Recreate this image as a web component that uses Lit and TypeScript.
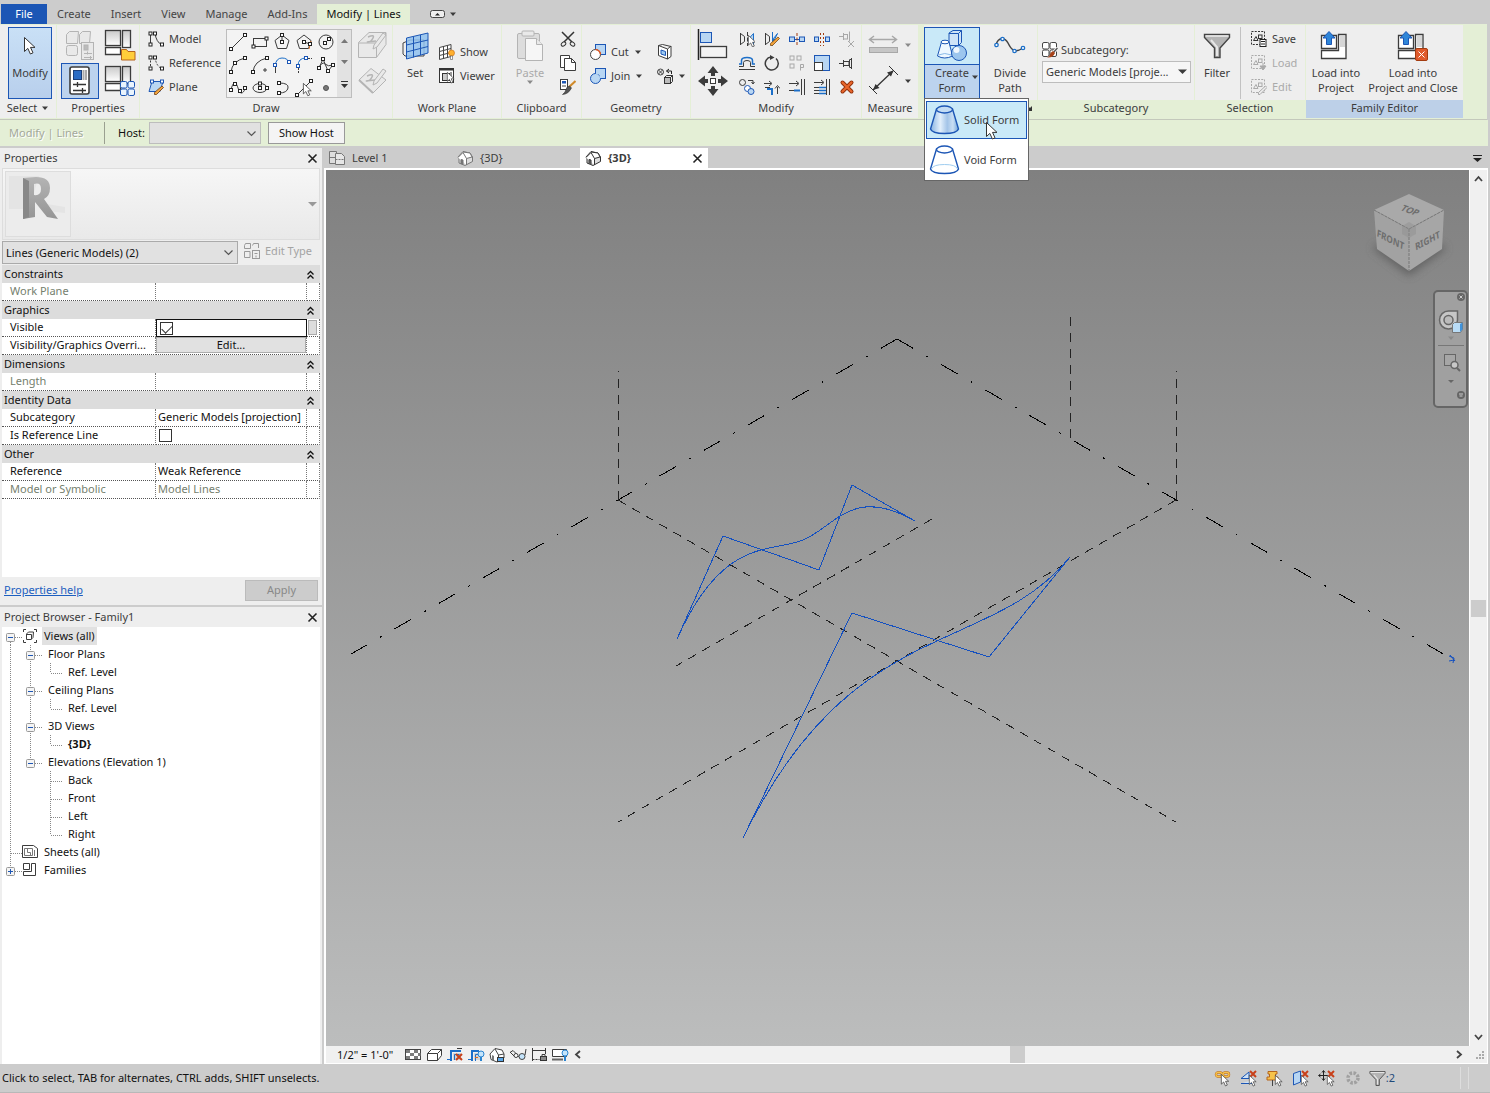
import { LitElement, html, svg, css, nothing } from "lit";
import type { TemplateResult } from "lit";
import { customElement, state } from "lit/decorators.js";
import { classMap } from "lit/directives/class-map.js";

/* ---------- icon helpers ---------- */

const icon = (w: number, h: number, body: unknown) =>
  html`<svg class="ic" width=${w} height=${h} viewBox="0 0 ${w} ${h}" aria-hidden="true">${body}</svg>`;

const node = (x: number, y: number, blue = false) =>
  svg`<rect class=${blue ? "nb" : "n"} x=${x - 1.5} y=${y - 1.5} width="3" height="3"/>`;

const cursor = (x: number, y: number, s = 1) => svg`<path transform="translate(${x} ${y}) scale(${s})"
  d="M0.5 0.5V14.5L3.8 11.4L6.4 17L9 15.8L6.5 10.4H11Z" fill="#fff" stroke="#333" stroke-linejoin="round"/>`;

const redX = (x: number, y: number) => svg`<path class="rx" d="M${x} ${y}l6 6m0-6l-6 6"/>`;

const down = icon(8, 5, svg`<path d="M1 0.5h6L4 4Z" fill="#3c3c3c"/>`);
const downGray = icon(8, 5, svg`<path d="M1 0.5h6L4 4Z" fill="#8a8a8a"/>`);
const close = icon(11, 11, svg`<path d="M1.5 1.5l8 8m0-8l-8 8" stroke="#222" stroke-width="1.6"/>`);
const chevron = icon(11, 8, svg`<path d="M1.5 1.5l4 4l4-4" fill="none" stroke="#555" stroke-width="1.2"/>`);

const docs = (extra: unknown) => icon(32, 32, svg`
  <defs><linearGradient id="dg" x1="0" y1="0" x2="0" y2="1"><stop offset="0" stop-color="#c9c9c9"/><stop offset="1" stop-color="#fff"/></linearGradient></defs>
  <rect x="1.500" y="1.500" width="15" height="15" fill="url(#dg)" stroke="#3c3c3c" stroke-width="1.300"/>
  <rect x="18.500" y="1.500" width="8" height="17" fill="url(#dg)" stroke="#3c3c3c" stroke-width="1.300"/>
  <path d="M1.500 18.500h15v7h-15Z" fill="#fff" stroke="#3c3c3c" stroke-width="1.300"/>${extra}`);

const blocks = (x: number, y: number, c: string) => svg`
  <g class=${c} transform="translate(${x} ${y})">
    <rect x="0.5" y="0.5" width="6.500" height="6.500" rx="1.5"/><rect x="8" y="0.5" width="6.500" height="6.500" rx="1.5"/>
    <rect x="0.5" y="8" width="6.500" height="6.500" rx="1.5"/><rect x="8" y="8" width="6.500" height="6.500" rx="1.5"/></g>`;

const typeProps = icon(32, 32, svg`<g class="g">
  <path d="M2.500 5.500l3-3h9l-1 12h-11Z"/><path d="M15.500 5.500l3-3h8l-1 12h-10Z"/>
  <rect x="2.500" y="16.500" width="11" height="10" rx="2"/>
  <rect x="17.500" y="13.500" width="12" height="17"/><rect x="20" y="16" width="4" height="5" fill="#bbb"/>
  <path d="M20 24.500h8M20 28.500h8M23.500 22.500v3M26.500 27v3"/></g>`);
const docFolder = docs(svg`<path d="M17.500 20.500h5l1.500 2h7v8.500h-13.500Z" fill="#ffce3a" stroke="#b5651d"/>`);
const docBlocks = docs(blocks(16, 16, "bw"));
const propsIcon = icon(22, 30, svg`<rect x="1" y="1" width="19" height="27" rx="2" fill="#fff" stroke="#3c3c3c" stroke-width="1.600"/>
  <rect x="4.500" y="4.500" width="8" height="9" fill="#2b6cc4" stroke="#1b3f7a"/><path d="M14.500 4v10M17 4v10" stroke="#aaa" stroke-width="2"/>
  <path d="M4 18.500h13M4 24.500h13M8.500 16v5M13.500 22v5" stroke="#333" stroke-width="1.300"/>`);

const modelLine = icon(16, 16, svg`<path class="k" d="M2.500 2v12M7 2q1 9 7 12"/>${node(2.5, 2.5)}${node(2.5, 13.5)}${node(7, 2.5)}${node(14, 13.5)}`);
const refLine = icon(16, 16, svg`<path class="k" stroke-dasharray="2 1.500" d="M2.500 2v12M7 2q1 9 7 12"/>${node(2.5, 2.5)}${node(2.5, 13.5)}${node(7, 2.5)}${node(14, 13.5)}`);
const planeIcon = icon(16, 16, svg`<path d="M4 2.500h11l-3 10H1Z" fill="#b8d6f3" stroke="#1c56b5"/><path d="M14 7l1.500 1.500l-7 7h-2v-2Z" fill="#f1a33c" stroke="#6b3a12" stroke-width="0.800"/>${node(4, 2.5, true)}${node(14, 2.5, true)}`);

/* ---------- draw gallery ---------- */
const drawTools: [string, TemplateResult][] = [
  ["Line", icon(20, 20, svg`<path class="k" d="M3 17L17 3"/>${node(3, 17)}${node(17, 3)}`)],
  ["Rectangle", icon(20, 20, svg`<rect class="k" x="3.500" y="6.500" width="13" height="8"/>${node(3.5, 14.5)}${node(16.5, 6.5)}`)],
  ["Inscribed Polygon", icon(20, 20, svg`<path class="k" d="M10 3l7 5.500l-2.500 8h-9L3 8.500Z"/><path class="k" d="M10 3v7"/>${node(10, 3)}${node(10, 10)}`)],
  ["Circumscribed Polygon", icon(20, 20, svg`<path class="k" d="M10 3l7 5.500l-2.500 8h-9L3 8.500Z"/><path d="M17 9l-2 8" stroke="#e07020"/><path class="k" d="M10 10l6 2"/>${node(10, 10)}${node(16, 12)}`)],
  ["Circle", icon(20, 20, svg`<circle class="k" cx="10" cy="10" r="7"/><path class="k" d="M9 11l4-4"/>${node(9, 11)}${node(13, 7)}`)],
  ["Start-End-Radius Arc", icon(20, 20, svg`<path class="k" d="M3 17q1-11 14-14"/>${node(3, 17)}${node(7, 8)}${node(17, 3)}`)],
  ["Center-ends Arc", icon(20, 20, svg`<path class="k" d="M3 17q1-11 14-14"/><path d="M15 13v4M13 15h4" stroke="#3c3c3c"/>${node(3, 17)}${node(17, 3)}`)],
  ["Tangent End Arc", icon(20, 20, svg`<path class="b" d="M3 11q1-8 7-8t7 5"/><path d="M3.500 12v6" stroke="#3c3c3c"/>${node(3, 10, true)}${node(17, 7, true)}`)],
  ["Fillet Arc", icon(20, 20, svg`<path class="b" d="M4 11q0-8 8-8"/><path d="M4.500 12v6M13 3.500h5" stroke="#3c3c3c" stroke-dasharray="3 1"/>${node(4, 11, true)}${node(12, 3, true)}`)],
  ["Spline", icon(20, 20, svg`<path class="k" d="M3 13L7 4l5 12l5-6"/><path class="k" d="M3 13q3-7 6-4t8 1"/>${node(3, 13)}${node(7, 4)}${node(12, 16)}${node(17, 10)}`)],
  ["Spline Through Points", icon(20, 20, svg`<path class="k" d="M3 12C5 3 8 3 10 10s5 6 7 1"/>${node(3, 12)}${node(7, 6)}${node(12, 13)}${node(17, 10)}`)],
  ["Ellipse", icon(20, 20, svg`<ellipse class="k" cx="10" cy="10" rx="7" ry="4.500"/>${node(10, 10)}${node(17, 10)}${node(10, 5.5)}`)],
  ["Partial Ellipse", icon(20, 20, svg`<path class="k" d="M7 5q10 0 9 5t-9 5"/>${node(7, 5)}${node(7, 15)}`)],
  ["Pick Lines", icon(20, 20, svg`<path class="k" d="M3 17L17 3"/>${node(3, 17)}${node(17, 3)}${cursor(9, 5, 0.75)}`)],
  ["Point Element", icon(20, 20, svg`<circle cx="10" cy="10" r="2.500" fill="#777" stroke="#555"/>`)],
];

const pen = svg`<path d="M28 4l3 2l-9 12l-4 2l1-4Z" transform="translate(-2 0)"/>`;
const drawFace = icon(32, 32, svg`<g class="g"><path d="M1.500 13.500L12 3.500h17v12L19.500 28.500h-18Z"/><path d="M1.500 14h18v14.500M19.500 14l9.500-10"/><path d="M11 8q7-3 5 1t-5 4t8-1" stroke-width="1.500"/>${pen}</g>`);
const drawPlane = icon(32, 32, svg`<g class="g"><path d="M2 15L14 3.500L29 15L16 28Z"/><path d="M2 15l14 13" stroke-width="2"/><path d="M10 11q7-3 5 1t-5 4t8-1" stroke-width="1.500"/>${pen}</g>`);

/* ---------- work plane / clipboard / geometry ---------- */
const setIcon = icon(28, 30, svg`<path d="M2 12l7-3h14v16H4l-2-2Z" fill="#eee" stroke="#444"/>
  <path d="M5.500 7L27 2v20L5.500 28Z" fill="#8fc1ee" fill-opacity="0.850" stroke="#1c56b5"/>
  <path d="M12.500 5.500v21M19.500 4v20M5.500 14L27 9M5.500 21L27 15.500" stroke="#1c56b5" fill="none"/>`);
const showIcon = icon(16, 16, svg`<path d="M0.500 3.500L12 0.500v12L0.500 15.500ZM4.500 2.500v12M8.500 1.500v12M0.500 7.500L12 4.500M0.500 11.500L12 8.500" fill="#fff" stroke="#444"/>
  <circle cx="12.500" cy="9" r="3" fill="#ffb02e" stroke="#c86a10" stroke-width="0.600"/><path d="M11.500 12h2v3.500h-2Z" fill="#fff" stroke="#555" stroke-width="0.600"/>`);
const viewerIcon = icon(16, 16, svg`<rect x="0.500" y="0.500" width="14" height="14" fill="#fff" stroke="#333"/><path d="M0 1.500h15" stroke="#333" stroke-width="2"/><rect x="3.500" y="5.500" width="7" height="7" fill="#ccc" stroke="#333"/><path d="M12 4v10" stroke="#999" stroke-width="2"/>${cursor(8, 4, 0.65)}`);
const pasteIcon = icon(28, 32, svg`<g class="g"><rect x="1.500" y="3.500" width="22" height="25" rx="1.500" fill="#ddd"/><rect x="6" y="1" width="12" height="5" rx="1"/><path d="M9.500 8.500h11l6 6v16h-17Z" fill="#f6f6f6"/><path d="M20.500 8.500v6h6"/></g>`);
const cutClip = icon(16, 16, svg`<path d="M2 1l10 10M14 1L4 11" stroke="#333" stroke-width="1.500"/><ellipse cx="3.500" cy="13" rx="2.500" ry="1.800" fill="none" stroke="#333" transform="rotate(-40 3.500 13)"/><ellipse cx="12.500" cy="13" rx="2.500" ry="1.800" fill="none" stroke="#333" transform="rotate(40 12.500 13)"/>`);
const copyClip = icon(16, 16, svg`<path class="w" d="M0.500 0.500h9v12h-9Z"/><path class="w" d="M4.500 3.500h7l4 4v8h-11Z"/><path class="k" d="M11.500 3.500v4h4"/>`);
const matchType = icon(16, 16, svg`<rect class="w" x="0.500" y="0.500" width="7" height="10"/><rect x="2" y="2" width="4" height="2.500" fill="#1c56b5"/><path d="M2 7h4" stroke="#444"/><path d="M15.500 2L9 8" stroke="#d08a2a" stroke-width="2"/><path d="M9.500 7l2 2q-3 6-9 6.500q3-2 3.500-5t3.500-3.500" fill="#555" stroke="#333" stroke-width="0.600"/>`);
const cutGeo = icon(16, 16, svg`<rect x="5.500" y="0.500" width="10" height="10" fill="#b8d6f3" stroke="#1c56b5"/><circle cx="5.500" cy="10.500" r="5" fill="#fff" stroke="#444"/><path d="M5.500 5.500a5 5 0 0 1 5 5" fill="none" stroke="#e0561e" stroke-width="1.400"/>`);
const joinGeo = icon(16, 16, svg`<rect x="5.500" y="0.500" width="10" height="10" fill="#b8d6f3" stroke="#1c56b5"/><circle cx="5.500" cy="10.500" r="5" fill="#b8d6f3" stroke="#1c56b5"/><path d="M6 5.500h4.500v4.500" fill="none" stroke="#b8d6f3" stroke-width="2"/>`);
const splitFace = icon(16, 16, svg`<path class="w" d="M1.500 1.500l9 3.500v10l-9-3.500ZM10.500 5l3.500-3v10.500l-3.500 2.500M1.500 1.500l4-1l8.500 2"/><path d="M4 6l4.500 1.500v4L4 10Z" fill="#9ccaf2" stroke="#1c56b5"/>`);
const demolish = icon(16, 16, svg`<circle cx="3.500" cy="4" r="3" fill="none" stroke="#444"/><path d="M1.500 2l4 4m0-4l-4 4" stroke="#444"/><path d="M9.500 3h5v3M12 1l-2.500 2L12 5" fill="none" stroke="#222"/><rect x="7.500" y="9.500" width="6" height="6" fill="#bbb" stroke="#333"/><path d="M7.500 9.500l2-2h6v6l-2 2M13.500 9.500l2-2" fill="none" stroke="#333"/>`);

/* ---------- modify ---------- */
const alignIcon = icon(32, 32, svg`<path d="M1.500 0v31" stroke="#222" stroke-width="1.500"/><rect x="3.500" y="3.500" width="11" height="10" fill="#b8d6f3" stroke="#1c56b5"/><rect x="3.500" y="17.500" width="26" height="11" fill="#f3f3f3" stroke="#3c3c3c" stroke-width="1.300"/>`);
const moveIcon = icon(32, 32, svg`<path d="M16 1l5.500 7h-3.500v3h-4v-3h-3.500ZM16 31l5.500-7h-3.500v-3h-4v3h-3.500ZM1 16l7-5.500v3.500h3v4h-3v3.500ZM31 16l-7-5.500v3.500h-3v4h3v3.500Z" fill="#3c3c3c"/><rect x="13.500" y="13.500" width="5" height="5" fill="#fff" stroke="#3c3c3c"/>`);
const modifyTools: [string, TemplateResult][] = [
  ["Mirror - Pick Axis", icon(16, 16, svg`<path class="k" d="M1.500 2v12M1.500 2.500l4 3v5l-4 3"/><path d="M14.500 2.500l-4.500 5v3l4.500 3Z" fill="#b8d6f3" stroke="#1c6fc9"/><path class="k" stroke-dasharray="4 1.500" d="M8.500 1v14"/>${cursor(9, 4, 0.7)}`)],
  ["Mirror - Draw Axis", icon(16, 16, svg`<path class="k" d="M1.500 2v12M1.500 2.500l4 3v5l-4 3"/><path d="M13.500 2.500l-4 5v3Z" fill="#b8d6f3" stroke="#1c6fc9"/><path class="b" d="M8.500 1v14"/><path d="M14 6l1.500 1.500l-7 7h-2v-2Z" fill="#f1a33c" stroke="#7b4a12" stroke-width="0.800"/>`)],
  ["Split Element", icon(16, 16, svg`<rect x="0.500" y="6" width="5" height="4.500" fill="#b8d6f3" stroke="#1c56b5"/><rect x="10.500" y="6" width="5" height="4.500" fill="#b8d6f3" stroke="#1c56b5"/><path d="M5.500 8.500h5" stroke="#1c56b5"/><path d="M8 2v13" stroke="#a33c10" stroke-dasharray="3 1.500"/>`)],
  ["Split with Gap", icon(16, 16, svg`<rect x="0.500" y="6" width="4" height="4.500" fill="#b8d6f3" stroke="#1c56b5"/><rect x="11.500" y="6" width="4" height="4.500" fill="#b8d6f3" stroke="#1c56b5"/><path d="M6.500 2v13M9.500 2v13" stroke="#a33c10" stroke-dasharray="2 2"/>`)],
  ["Unpin", icon(16, 16, svg`<path class="gs" d="M0 5.500h4M4.500 2v7M5 3.500h4M5 8h4M10.500 0.500v10M8.500 3v5M9 10l6 6m0-6l-6 6"/>`)],
  ["Offset", icon(16, 16, svg`<path class="k" d="M0 14.500h16"/><path class="k" d="M0 11.500h4.500V7.500q0-2 3.500-2t3.500 2v4H16"/><path class="b" stroke-width="1.500" d="M0 9h2.500V5.500q0-3 5.500-3t5.500 3V9H16"/>`)],
  ["Rotate", icon(16, 16, svg`<path d="M7 2a6.500 6.500 0 1 0 5 1.500" fill="none" stroke="#3c3c3c" stroke-width="1.500"/><path d="M6 0l4.500 2.500L6 5Z" fill="#3c3c3c"/>`)],
  ["Array", icon(16, 16, svg`<g class="gs"><rect x="1" y="1" width="4" height="4"/><rect x="8" y="1" width="4" height="4"/><rect x="1" y="9" width="4" height="4"/><path d="M11.500 15.500v-6h3v3h-3"/></g>`)],
  ["Scale", icon(16, 16, svg`<rect x="0.500" y="0.500" width="15" height="15" fill="#b8d6f3" stroke="#1c56b5"/><rect class="w" x="0.500" y="7.500" width="8" height="8"/>`)],
  ["Pin", icon(16, 16, svg`<path class="k" d="M0 8.500h4M4.500 5v7M5 6.500h5v4H5M12.500 3v11M10.500 4.500v8M10.500 5l2-1M10.500 12l2 1"/>`)],
  ["Copy", icon(16, 16, svg`<circle class="k" cx="3.500" cy="3.500" r="3"/><path class="k" d="M9 1.500h5v3M12.500 3l1.500 2l1.500-2"/><circle cx="8.500" cy="9.500" r="3" fill="#fff" stroke="#1c56b5"/><circle cx="12" cy="12.500" r="3" fill="#b8d6f3" stroke="#1c56b5"/>`)],
  ["Trim/Extend to Corner", icon(16, 16, svg`<path class="k" d="M0 4.500h7M5 2l3 2.500L5 7M1 8.500h5M13.500 15V8M11 9.500l2.500-3l2.500 3"/><path class="b" stroke-width="2" d="M3 10h5v6"/>`)],
  ["Trim/Extend Single Element", icon(16, 16, svg`<path class="k" d="M0 4.500h9M7 2l3 2.500L7 7M0 11.500h5M12.500 0v16M15.500 0v16"/><path class="b" stroke-width="2" d="M5 11.500h6"/>`)],
  ["Trim/Extend Multiple Elements", icon(16, 16, svg`<path class="k" d="M0 3.500h9M7 1l3 2.500L7 6M0 8.500h5M0 11.500h5M0 14.500h5M12.500 0v16M15.500 0v16"/><path class="b" stroke-width="1.500" d="M5 8.500h7M5 11.500h7M5 14.500h7"/>`)],
  ["Delete", icon(16, 16, svg`<path d="M3.500 3.500l9 9M12.500 3.500l-9 9" stroke="#8f2f0a" stroke-width="4" stroke-linecap="round"/><path d="M3.500 3.500l9 9M12.500 3.500l-9 9" stroke="#e8662c" stroke-width="2.200" stroke-linecap="round"/>`)],
];
const measureBetween = icon(32, 22, svg`<g class="gs"><path d="M2 5.500h26M6 2L1.500 5.500L6 9M24 2l4.500 3.500L24 9" stroke-width="1.500"/><rect x="1.500" y="13.500" width="28" height="5" fill="#c6c6c6"/></g>`);
const alignedDim = icon(32, 32, svg`<path d="M5 25L25 6" stroke="#333" stroke-width="1.300"/><path d="M5 25l2.500-6l4 4ZM25.500 5.500l-6.500 2l4 4Z" fill="#333"/><path d="M1 21l8 8M21 1l9 9" stroke="#333"/>`);

/* ---------- form ---------- */
const createForm = icon(32, 32, svg`<path d="M13 3l4-2.500h8.500v12l-3 3H13Z" fill="#cfe3f7" stroke="#1c56b5"/><path d="M13 3.500h9.500v12M22.500 3.500l3-3" fill="none" stroke="#1c56b5"/>
  <path d="M5.500 12L1.500 26q7 4 15 0L13 12Z" fill="#eef7ff" stroke="#1c56b5"/><ellipse cx="9" cy="12" rx="4" ry="1.800" fill="#fff" stroke="#1c56b5"/><path d="M2.500 25q6-3 13 0" fill="none" stroke="#8bbbe8"/>
  <circle cx="23" cy="23" r="7.500" fill="#9cc6ee" stroke="#1c56b5"/><circle cx="20.500" cy="20" r="3" fill="#fff" opacity="0.850"/>`);
const dividePath = icon(32, 20, svg`<path d="M2 9C4 1 11 1 14 7S20 18 29 12" fill="none" stroke="#444" stroke-width="1.500"/>
  <g fill="#fff" stroke="#1c6fc9" stroke-width="1.300"><circle cx="2.500" cy="9" r="1.700"/><circle cx="8.500" cy="3" r="1.700"/><circle cx="20.500" cy="15" r="1.700"/><circle cx="29" cy="12" r="1.700"/></g>`);
const frustum = (solid: boolean) => icon(32, 32, svg`
  <defs><linearGradient id="fg" x1="0" y1="0" x2="1" y2="0"><stop offset="0" stop-color="#86b2e0"/><stop offset="0.350" stop-color="#e2effb"/><stop offset="0.600" stop-color="#a3c4e8"/><stop offset="0.800" stop-color="#c9def3"/><stop offset="1" stop-color="#6fa3d8"/></linearGradient></defs>
  <path d="M7.500 5L1.500 25Q3 29.500 15.500 29.500T29.500 25L23.500 5Z" fill=${solid ? "url(#fg)" : "#fff"} stroke="#1c56b5" stroke-width="1.400"/>
  ${solid ? nothing : svg`<path d="M2.500 25Q4 20.500 15.500 20.500T28.500 25" fill="none" stroke="#9fcdf0"/>`}
  <ellipse cx="15.500" cy="5.500" rx="8" ry="3.500" fill=${solid ? "#c3dcf4" : "#fff"} stroke="#1c56b5" stroke-width="1.400"/>`);

/* ---------- right-hand ribbon ---------- */
const subcatIcon = icon(16, 16, svg`${blocks(0, 0, "kw")}<path d="M15.500 6L10 12" stroke="#fff" stroke-width="3"/><path d="M15.500 6L11 11" stroke="#555" stroke-width="1.500"/><path d="M11 9l2 2q-2 5-8 4.500q3-1 3-3t3-3.500" fill="#a8431a"/>`);
const funnel = (w: number) => html`<svg class="ic" width=${w} height=${w} viewBox="0 0 28 28" aria-hidden="true"><path d="M1.500 2.500h25v3L17 16v9.500h-5.500V16L1.500 5.500Z" fill="#b4b4b4" stroke="#444" stroke-width="1.400"/><path d="M2.500 4h23" stroke="#eee" stroke-width="1.500"/><path d="M8 8l6 7v9" fill="none" stroke="#e6e6e6" stroke-width="2"/></svg>`;
const selIcon = (c: string, extra: unknown) => icon(16, 16, svg`<rect x="0.500" y="0.500" width="13" height="13" fill="none" stroke=${c} stroke-dasharray="2 1.250"/><path d="M2.500 9.500l2.500-4l2 4Z" fill="none" stroke=${c}/><rect x="7.500" y="4" width="3.500" height="3.500" fill="none" stroke=${c}/>${extra}`);
const saveSel = selIcon("#333", svg`<rect x="9" y="8.500" width="6" height="7" fill="#fff" stroke="#222"/><path d="M10 10.500h4M10 13h4" stroke="#222"/>`);
const loadSel = selIcon("#aaa", svg`<path d="M12 8v5m-3-2l3 4l3-4Z" fill="#aaa" stroke="#aaa"/>`);
const editSel = selIcon("#aaa", svg`<path d="M14.500 7l1.500 1.500l-7 7H7.500v-2Z" fill="#eee" stroke="#aaa"/>`);
const loadBase = svg`<g fill="#fff" stroke="#3c3c3c" stroke-width="1.300"><path d="M1.500 5.500h15v13h-15Z"/><path d="M18.500 4.500h7.500v24H1.500v-8h17Z"/></g><rect x="20" y="6" width="5" height="11" fill="#d6d6d6"/><path d="M9 1.500l6 6.500h-3.500v6.500h-5V8H3Z" fill="#2f86d8" stroke="#1c56b5"/>`;
const loadProj = icon(32, 32, loadBase);
const loadClose = icon(32, 32, svg`${loadBase}<rect x="18.500" y="18.500" width="12" height="12" rx="1.500" fill="#e05a2b" stroke="#a33c10"/><path d="M21.500 21.500l6 6m0-6l-6 6" stroke="#fff"/>`);
const launcher = icon(8, 8, svg`<path d="M1 1l4 4" stroke="#333" stroke-width="1.300"/><path d="M7 2v5H2Z" fill="#333"/>`);

/* ---------- view tabs, browser ---------- */
const house = (c: string) => icon(16, 16, svg`<path d="M1 7l5-5.500l7 1.500l2.500 4v4.500L8 15.500l-6-2.500V7" fill="#ddd" stroke=${c}/><path d="M1 7.500l5-5l3.500 6V15M6 2l7 1l2 4l-5.500 1.500" fill="#fff" stroke=${c}/><path d="M4 14V9.500l2 0.500v4.500" fill="#777" stroke=${c}/>`);
const planTab = icon(16, 16, svg`<path d="M0.500 1.500h7v12h-7ZM0.500 7.500h7" fill="#ddd" stroke="#777"/><path d="M6.500 3.500h6l3 3v8h-9Z" fill="#e6e6e6" stroke="#777"/><path d="M6.500 9.500h9" stroke="#777" stroke-dasharray="2 1"/>`);
const viewsIcon = icon(16, 16, svg`<path class="k" d="M1.500 4v-2.500h2.500M12 1.500h2.500v2.500M1.500 12v2.500h2.500M12 14.500h2.500v-2.500"/><path class="w" d="M4.500 6l2-2h5l-0.500 5.500l-2 2h-4.500Z"/><path class="k" d="M4.500 6.500h5v5"/>`);
const sheetsIcon = icon(16, 16, svg`<path class="w" d="M0.500 1.500h11l4 3v9h-15Z"/><path d="M2.500 4.500h8v7h-8ZM5.500 4.500v4h3v3M12.500 6v6" fill="none" stroke="#777"/>`);
const familiesIcon = icon(16, 16, svg`<path class="w" d="M1.500 1.500h6v6h-6ZM9.500 1.500h4v12h-12v-4h8Z"/>`);
const editTypeIcon = icon(16, 16, svg`<g class="gl"><path d="M0.500 2.500l1-2h5v5h-6ZM8.500 2.500l1-2h5v4.500M0.500 8.500h5.500v6h-5.500Z"/><rect x="8.500" y="7.500" width="7" height="8"/><path d="M10.500 10.500h3M12 12.500v2"/></g>`);

/* ---------- view control bar ---------- */
const viewTools: [string, TemplateResult][] = [
  ["Detail Level", icon(17, 16, svg`<rect x="0.500" y="2.500" width="15" height="10" fill="#fff" stroke="#444"/><path d="M1 3h4v3H1ZM9 3h4v3H9ZM5 6h4v3H5ZM13 6h2.500v3H13ZM1 9h4v3H1ZM9 9h4v3H9Z" fill="#7c7c7c"/>`)],
  ["Visual Style", icon(17, 16, svg`<path class="w" d="M1.500 6.500l4-4h10v6l-4 5h-10Z"/><path class="k" d="M1.500 6.500h10v7M11.500 6.500l4-4"/>`)],
  ["Sun Path", icon(17, 16, svg`<path d="M6 13V6h8v7Z" fill="#d5d5d5"/><path class="b" stroke-width="2" d="M4 14V4h10"/><path class="b" d="M0 12.500h3M7.500 13V7.500h5"/><path class="k" d="M10 1.500h5"/>${redX(9, 7)}`)],
  ["Crop View", icon(17, 16, svg`<path d="M6 13V6h6v7Z" fill="#d5d5d5"/><path class="b" stroke-width="2" d="M4 14V4h7"/><path class="b" d="M0 12.500h3M7.500 14V7.500h3"/><path d="M7 10.500h3" stroke="#e06a20"/><circle cx="13" cy="7" r="3" fill="#c4e4fb" stroke="#2a84d0"/><path d="M13 10v4" stroke="#2a84d0" stroke-width="2"/>`)],
  ["Locked 3D View", icon(17, 16, svg`<path d="M1 7L6 1.500l7 1.500l2 4v4L8 15l-6-2.500Z" fill="#fff" stroke="#444"/><path d="M6 2l3.500 6v7M9.500 8L15 7" fill="none" stroke="#444"/><path d="M3 13V8l2 1v4.500" fill="#777"/><rect x="8.500" y="10.500" width="6" height="4" fill="#5aa7e8" stroke="#333"/>`)],
  ["Temporary Hide/Isolate", icon(17, 16, svg`<path class="k" d="M0 5l4 4q2-2 3-1t3 3M16 2l-1 6M0 5.500l3-2l4 4"/><circle cx="6" cy="8.500" r="2" class="w"/><circle cx="12" cy="9.500" r="3" fill="#c4e4fb" stroke="#444"/>`)],
  ["Reveal Hidden Elements", icon(17, 16, svg`<path class="k" d="M1.500 1v13M14.500 1v6M1.500 3.500h13"/><path class="k" stroke-dasharray="2 1" d="M1.500 12.500h7"/><rect x="9.500" y="9.500" width="6" height="4" fill="#888" stroke="#333"/><path class="k" d="M11 9.500v-2h3v2"/>`)],
  ["Temporary View Properties", icon(17, 16, svg`<path class="w" d="M0.500 2.500h14v7h-14Z"/><path d="M0 12.500h11" stroke="#666" stroke-width="2"/><circle cx="13" cy="6" r="3" fill="#c4e4fb" stroke="#2a84d0"/><path d="M13 9v5" stroke="#2a84d0" stroke-width="2"/>`)],
];

/* ---------- status bar ---------- */
const statusTools: [string, TemplateResult][] = [
  ["Select Links", icon(18, 18, svg`<g fill="none" stroke-width="2.400" stroke="#b5651d"><rect x="2" y="3.500" width="6" height="4" rx="2"/><rect x="9" y="3.500" width="6" height="4" rx="2"/></g><g fill="none" stroke-width="1.400" stroke="#f6c24a"><rect x="2" y="3.500" width="6" height="4" rx="2"/><rect x="9" y="3.500" width="6" height="4" rx="2"/></g>${cursor(7, 5, 0.7)}`)],
  ["Select Underlay Elements", icon(18, 18, svg`<path d="M1 9.500L9 3v6.500ZM1 14.500h12l-2-3" fill="#cfe3f7" stroke="#1c56b5"/>${redX(10, 2)}${cursor(9, 6, 0.65)}`)],
  ["Select Pinned Elements", icon(18, 18, svg`<path d="M2 2.500h9v2.500H9.500v3H12v3H1V8h2.500V5H2Z" fill="#f6c24a" stroke="#b5651d"/><path d="M6.500 11v6" stroke="#444"/>${cursor(9, 6, 0.65)}`)],
  ["Select Elements by Face", icon(18, 18, svg`<path d="M1.500 4.500l7-2.500v11l-7 3Z" fill="#b8d6f3" stroke="#1c56b5"/>${redX(10, 2)}${cursor(9, 6, 0.65)}`)],
  ["Drag Elements on Selection", icon(18, 18, svg`<path d="M5.500 2v9M1 6.500h9M4 3.500l1.500-2l1.500 2M4 9.500l1.500 2l1.500-2M2.500 5l-2 1.500l2 1.500" fill="none" stroke="#222"/>${redX(10, 2)}${cursor(9, 6, 0.65)}`)],
  ["Background Processes", icon(18, 18, svg`<circle cx="9" cy="9" r="5" fill="none" stroke="#a0a0a0" stroke-width="3.500" stroke-dasharray="2.500 1.400"/>`)],
];

/* ---------- data ---------- */
interface Prop { name: string; value?: unknown; off?: boolean }
const properties: { title: string; rows: Prop[] }[] = [
  { title: "Constraints", rows: [{ name: "Work Plane", off: true }] },
  { title: "Graphics", rows: [{ name: "Visible", value: "check-on" }, { name: "Visibility/Graphics Overri...", value: "edit" }] },
  { title: "Dimensions", rows: [{ name: "Length", off: true }] },
  { title: "Identity Data", rows: [{ name: "Subcategory", value: "Generic Models [projection]" }, { name: "Is Reference Line", value: "check-off" }] },
  { title: "Other", rows: [{ name: "Reference", value: "Weak Reference" }, { name: "Model or Symbolic", value: "Model Lines", off: true }] },
];

/* Guide codes: v line through, t tee, e end, s blank, - open node, = last open node, + closed node, r root node */
const tree: { g: string; label: string; icon?: TemplateResult; cls?: string }[] = [
  { g: "r", label: "Views (all)", icon: viewsIcon, cls: "sel" },
  { g: "v-", label: "Floor Plans" },
  { g: "vve", label: "Ref. Level" },
  { g: "v-", label: "Ceiling Plans" },
  { g: "vve", label: "Ref. Level" },
  { g: "v-", label: "3D Views" },
  { g: "vve", label: "{3D}", cls: "bold" },
  { g: "v=", label: "Elevations (Elevation 1)" },
  { g: "vst", label: "Back" },
  { g: "vst", label: "Front" },
  { g: "vst", label: "Left" },
  { g: "vse", label: "Right" },
  { g: "t", label: "Sheets (all)", icon: sheetsIcon },
  { g: "+", label: "Families", icon: familiesIcon },
];

const guide = (c: string) => {
  const box = "-=+r".includes(c);
  const top = c === "r" ? 9 : 0;
  const bottom = "e=+".includes(c) ? 10 : 18;
  const art = icon(20, 18, svg`
    ${c !== "s" ? svg`<path class="dot" d="M8.500 ${top}V${bottom}"/>` : nothing}
    ${"te-=+r".includes(c) ? svg`<path class="dot" d="M8.500 10.500H20"/>` : nothing}
    ${box ? svg`<rect x="4.500" y="6.500" width="8" height="8" rx="1" fill="#f4f4f4" stroke="#999"/><path d="M6 10.500h5${c === "+" ? "M8.500 8v5" : ""}" stroke="#1c56b5"/>` : nothing}`);
  return box ? html`<button class="plain" aria-label="Toggle branch">${art}</button>` : art;
};

@customElement("app-root")
export class AppRoot extends LitElement {
  @state() private viewTab = 2;
  @state() private formMenu = true;

  static styles = css`
    :host { display: block; font: 11px/16px "Noto Sans", "Open Sans", sans-serif; color: #111; }
    * { box-sizing: border-box; }
    .app { display: flex; flex-direction: column; min-height: 100vh; background: #ccc; border-bottom: 1px solid #b8b8b8; }
    button, select, input { font: inherit; color: inherit; margin: 0; padding: 0; }
    button { border: 0; background: none; white-space: nowrap; }
    .ic { display: block; flex: none; }
    .k { fill: none; stroke: #3c3c3c; }
    .b { fill: none; stroke: #1c6fc9; }
    .w { fill: #fff; stroke: #3c3c3c; }
    .n { fill: #fff; stroke: #222; }
    .nb { fill: #fff; stroke: #1c56b5; }
    .g { fill: #e9e9e9; stroke: #b4b4b4; }
    .gs { fill: none; stroke: #a8a8a8; }
    .gl { fill: none; stroke: #999; }
    .bw { fill: #eaf4fd; stroke: #1c56b5; }
    .kw { fill: #fff; stroke: #444; }
    .rx { stroke: #c8401a; stroke-width: 2; }
    .dot { fill: none; stroke: #888; stroke-dasharray: 1 1; shape-rendering: crispEdges; }
    .plain { display: grid; place-items: center; }

    /* ribbon tabs */
    .tabs { display: flex; height: 24px; padding: 4px 0 0 1px; color: #444; }
    .tabs button { padding: 0 10px; height: 20px; }
    .tabs .file { background: #1c56b5; color: #fff; width: 46px; padding: 0; }
    .tabs .on { background: #e4efd6; color: #111; padding: 0 9px; }
    .tabs .cycle { display: flex; align-items: center; gap: 3px; padding: 0 20px; }

    /* ribbon */
    .ribbon { display: flex; height: 96px; margin-right: 3px; background: #e4efd6; border-bottom: 1px solid #c3c8bb; color: #3c3c3c; }
    .panel { display: flex; flex-direction: column; flex: none; background: #eee; border: solid #e4efd6; border-width: 1px 1px 1px 0; }
    .body { display: flex; height: 75px; padding-top: 2px; }
    .title { height: 18px; padding-bottom: 2px; text-align: center; display: flex; justify-content: center; align-items: center; gap: 4px; }
    .ctx .title { background: #e4efd6; }
    .fam .title { background: #bdd0e8; }
    .select { width: 57px; } .props { width: 83px; } .draw { width: 253px; } .work { width: 109px; }
    .clip { width: 80px; } .geo { width: 109px; } .mod { width: 171px; } .meas { width: 57px; }
    .form { width: 114px; margin-left: 5px; } .subc { width: 157px; } .seln { width: 111px; } .fam { width: 158px; }
    .big { display: flex; flex-direction: column; align-items: center; height: 72px; line-height: 15px; flex: none; }
    .big .pic { height: 38px; display: grid; place-items: center; }
    .off { color: #aaa; }
    .hot { box-shadow: inset 0 0 0 1px #1c56b5; background: #bcd3ee; }
    .select .body { padding-left: 8px; }
    .select .big { width: 44px; background: linear-gradient(#c9e0f6, #b8cfec); }
    .props .body { padding-left: 4px; display: grid; grid-template: 36px 36px / 38px 38px; column-gap: 2px; }
    .col { display: flex; flex-direction: column; flex: none; }
    .row { display: flex; align-items: center; height: 24px; gap: 5px; padding: 0; }
    .two { padding-top: 13px; }
    .draw .body { padding-left: 8px; }
    .draw .col { width: 78px; }
    .gallery { display: flex; width: 126px; height: 69px; border: 1px solid #bdbdbd; margin: 2px 5px 0 0; background: #f3f3f3; }
    .cells { display: grid; grid-template-columns: repeat(5, 22px); grid-auto-rows: 23px; flex: 1; }
    .scroll { width: 14px; display: grid; background: #e2e2e2; }
    .planes { display: grid; grid-template-rows: 36px 36px; }
    .work .body { padding-left: 4px; } .work .big { width: 36px; margin-right: 6px; }
    .clip .body { padding-left: 6px; } .clip .big { width: 44px; margin-right: 8px; }
    .geo .body { padding-left: 8px; gap: 8px; } .geo .col { width: 59px; } .geo .col + .col { width: 32px; }
    .mod .body { padding-left: 6px; gap: 5px; }
    .mini { display: grid; grid-template-columns: repeat(5, 25px); grid-auto-rows: 24px; }
    .meas .body { padding-left: 6px; } .meas .row { height: 36px; gap: 4px; }
    .subc .body { padding: 14px 3px 0 4px; flex-direction: column; }
    .subc .row { height: 22px; gap: 3px; }
    .pick { position: relative; display: block; }
    .pick select { appearance: none; width: 100%; height: 22px; border: 1px solid #bdbdbd; border-radius: 0; background: #f6f6f6; padding: 0 18px 0 3px; opacity: 1; }
    .pick .ic { position: absolute; right: 4px; top: 8px; pointer-events: none; }
    .seln .big { width: 44px; } .seln .col { border-left: 1px solid #c2c2c2; padding-left: 10px; height: 72px; }
    .seln .body { gap: 1px; }
    .fam .big { width: 60px; } .fam .big + .big { width: 94px; }

    /* create form */
    .form .big { width: 56px; }
    .form .big.hot { background: linear-gradient(#c9e9f8 37px, #1c56b5 37px, #1c56b5 38px, #bcd3ee 38px); }
    .form .anchor + .big { width: 58px; margin-left: 1px; }
    .form .title { justify-content: flex-end; padding-right: 4px; }
    .caret { position: relative; }
    .caret .ic { position: absolute; right: -13px; top: -5px; }
    .anchor { position: relative; }
    .menu { position: absolute; left: 0; top: 71px; z-index: 5; display: grid; gap: 2px; width: 105px; padding: 2px 1px 1px; background: #fff; border: 1px solid #666; }
    .menu button { display: flex; align-items: center; gap: 3px; width: 101px; height: 38px; padding-left: 2px; border: 1px solid transparent; }
    .menu .cur { background: #c9e9f8; border-color: #1c56b5; }
    .pointer { position: absolute; left: 60px; top: 22px; pointer-events: none; }

    /* options bar */
    .options { display: flex; align-items: center; height: 26px; margin-right: 2px; padding-left: 9px; background: #e4efd6; }
    .options .mode { color: #a3a99b; text-shadow: 1px 1px #fff; width: 96px; height: 22px; line-height: 22px; border-right: 1px solid #9aa090; margin-right: 13px; }
    .options .pick { width: 112px; margin: 0 7px 0 4px; }
    .options .pick select { background: #e1e1e1; }
    .options .host { padding: 0 10px; height: 22px; border: 1px solid #999; background: #f4f4f4; }

    /* docked area */
    .main { display: grid; grid-template-columns: 322px minmax(0, 1fr); column-gap: 2px; flex: 1; margin: 2px 2px 0 0; }
    .dock { display: flex; flex-direction: column; background: #eee; padding: 0 2px; }
    .head { display: flex; align-items: center; justify-content: space-between; height: 20px; padding: 0 2px; color: #3c3c3c; }
    .type { display: flex; align-items: center; justify-content: space-between; height: 72px; padding: 0 2px; border: 1px solid #ddd; background: linear-gradient(#f6f6f6, #e9e9e9); }
    .logo { border: 1px solid #ddd; width: 66px; height: 66px; display: grid; place-items: center; background: #ececec; }
    .filter { display: flex; align-items: center; gap: 6px; height: 25px; }
    .filter .pick { width: 236px; }
    .filter .pick select { height: 23px; background: #e1e1e1; border-color: #aaa; }
    .filter .edit { display: flex; gap: 5px; align-items: center; color: #a3a3a3; height: 22px; align-self: flex-start; }
    .grid { flex: none; height: 312px; background: #fff; }
    table { width: 100%; border-collapse: separate; border-spacing: 0; table-layout: fixed; }
    .c1 { width: 154px; } .c3 { width: 13px; }
    td, th { height: 18px; padding: 0; line-height: 16px; text-align: left; font-weight: 400; white-space: nowrap; overflow: hidden; }
    .cat th { background: #dcdcdc; padding: 0 2px; }
    .cat div { display: flex; justify-content: space-between; align-items: center; padding-right: 4px; }
    .p th, .p td { border-bottom: 1px dotted #555; border-right: 1px dotted #777; vertical-align: top; }
    .p th { padding-left: 8px; } .p td { padding-left: 2px; }
    .p.off { color: #75806e; }
    .p td.edit-cell { padding: 0; }
    .p td.box { border: 1px solid #111; padding-left: 2px; }
    .edit-btn { display: block; width: 150px; height: 16px; line-height: 14px; background: #e1e1e1; border: 1px solid #adadad; }
    .more { display: block; width: 9px; height: 15px; margin: 1px 0 0 1px; background: #ddd; border: 1px solid #aaa; }
    .p td.side { padding: 0; }
    input[type="checkbox"] { appearance: none; display: block; width: 13px; height: 13px; margin: 2px 0 0 1px; border: 1px solid #333; background: #fff; }
    input[type="checkbox"]:checked::before { content: ""; display: block; width: 9px; height: 5px; margin: 2px 0 0 1px; border: solid #333; border-width: 0 0 1px 1px; transform: rotate(-45deg); }
    .foot { display: flex; align-items: center; justify-content: space-between; height: 28px; padding: 0 2px 2px; }
    .foot a { color: #1c5fc0; }
    .foot button { width: 73px; height: 21px; background: #ccc; border: 1px solid #bbb; color: #888; }
    .split { flex: none; height: 2px; margin: 0 -2px; background: #ccc; }
    .tree { flex: 1; margin: 0; padding: 0; list-style: none; background: #fff; }
    .tree li { display: flex; align-items: center; height: 18px; }
    .tree .label { margin-left: 4px; padding: 0 2px; line-height: 18px; }
    .sel { background: #e1e1e1; }
    .bold { font-weight: 700; }

    /* view area */
    .view { display: flex; flex-direction: column; }
    .vtabs { display: flex; height: 20px; background: #ccc; align-items: stretch; }
    .vtab { display: flex; align-items: center; width: 128px; padding: 0 5px; color: #3c3c3c; }
    .vtab button { flex: 1; display: flex; align-items: center; gap: 7px; text-align: left; }
    .vtab .close { flex: none; }
    .vtab.on { background: #fff; font-weight: 700; }
    .vtabs .list { margin-left: auto; padding-right: 5px; }
    .stage { display: grid; grid-template: minmax(0, 1fr) 17px / minmax(0, 1fr) 17px; flex: 1; border: solid #fff; border-width: 2px 1px 1px 2px; column-gap: 1px; background: #fff; }
    .canvas { position: relative; background: linear-gradient(#808080, #bcbdbd); min-height: 600px; }
    .scene { position: absolute; inset: 0; width: 100%; height: 100%; display: block; }
    .vbar { display: flex; flex-direction: column; justify-content: space-between; align-items: center; background: #f0f0f0; padding: 5px 0; }
    .thumb { background: #ccc; width: 15px; height: 17px; }
    .controls { display: flex; align-items: center; background: #f0f0f0; padding-left: 11px; grid-column: 1 / 3; }
    .scale { width: 67px; text-align: left; }
    .controls .t { width: 21px; text-align: left; }
    .controls .t .ic { margin: 0 0 0 1px; }
    .hbar { flex: 1; display: grid; grid-template-columns: 51fr 17px 50fr 14px 18px; align-items: center; padding-left: 2px; }
    .nav { position: absolute; right: 1px; top: 120px; width: 35px; height: 118px; border: 2px solid #666; border-radius: 5px; background: #a0a0a0; display: flex; flex-direction: column; align-items: center; }
    .nav .end { align-self: flex-end; margin: 1px; }
    .nav .rule { width: 26px; border-top: 1px solid #777; margin: 4px 0; }

    /* status bar */
    .status { display: flex; align-items: center; height: 28px; padding: 0 21px 0 2px; }
    .msg { flex: 1; }
    .st { width: 26px; padding-left: 1px; }
    .count { display: flex; align-items: center; color: #1f4a7a; margin-right: 65px; }
    .tick { width: 8px; height: 22px; border-left: 1px solid #ddd; }
    .tick:last-child { width: 1px; }
  `;

  private big(label: unknown, pic: unknown, cls = "") {
    return html`<button class="big ${cls}"><span class="pic">${pic}</span><span class="lab">${label}</span></button>`;
  }

  private rowBtn(label: string, pic: unknown, cls = "", arrow = false) {
    return html`<button class="row ${cls}">${pic}<span>${label}</span>${arrow ? down : nothing}</button>`;
  }

  private tool(label: string, pic: unknown, cls = "") {
    return html`<button class="plain ${cls}" aria-label=${label}>${pic}</button>`;
  }

  private renderRibbon() {
    return html`
      <div class="ribbon">
        <section class="panel select">
          <div class="body">${this.big("Modify", icon(14, 20, cursor(1, 1)), "hot")}</div>
          <div class="title">Select ${down}</div>
        </section>
        <section class="panel props">
          <div class="body">
            ${this.tool("Family Types", typeProps)}${this.tool("Family Category", docFolder)}
            ${this.tool("Properties", propsIcon, "hot")}${this.tool("Type Properties", docBlocks)}
          </div>
          <div class="title">Properties</div>
        </section>
        <section class="panel draw">
          <div class="body">
            <div class="col">${this.rowBtn("Model", modelLine)}${this.rowBtn("Reference", refLine)}${this.rowBtn("Plane", planeIcon)}</div>
            <div class="gallery">
              <div class="cells">${drawTools.map(([l, i]) => this.tool(l, i))}</div>
              <div class="scroll">
                ${this.tool("Scroll up", icon(9, 6, svg`<path d="M1 5h7L4.500 1Z" fill="#777"/>`))}
                ${this.tool("Scroll down", icon(9, 6, svg`<path d="M1 1h7L4.500 5Z" fill="#777"/>`))}
                ${this.tool("More tools", icon(9, 9, svg`<path d="M1 1.500h7" stroke="#333"/><path d="M1 4h7L4.500 8Z" fill="#333"/>`))}
              </div>
            </div>
            <div class="planes">${this.tool("Draw on Face", drawFace)}${this.tool("Draw on Work Plane", drawPlane)}</div>
          </div>
          <div class="title">Draw</div>
        </section>
        <section class="panel work">
          <div class="body">${this.big("Set", setIcon)}<div class="col two">${this.rowBtn("Show", showIcon)}${this.rowBtn("Viewer", viewerIcon)}</div></div>
          <div class="title">Work Plane</div>
        </section>
        <section class="panel clip">
          <div class="body">
            <button class="big off"><span class="pic">${pasteIcon}</span><span class="lab">Paste</span>${downGray}</button>
            <div class="col">
              <div class="row">${this.tool("Cut to Clipboard", cutClip)}</div><div class="row">${this.tool("Copy to Clipboard", copyClip)}</div><div class="row">${this.tool("Match Type", matchType)}</div>
            </div>
          </div>
          <div class="title">Clipboard</div>
        </section>
        <section class="panel geo">
          <div class="body">
            <div class="col two">${this.rowBtn("Cut", cutGeo, "", true)}${this.rowBtn("Join", joinGeo, "", true)}</div>
            <div class="col two"><div class="row">${this.tool("Split Face", splitFace)}</div><div class="row">${this.tool("Demolish", demolish)}${down}</div></div>
          </div>
          <div class="title">Geometry</div>
        </section>
        <section class="panel mod">
          <div class="body">
            <div class="planes">${this.tool("Align", alignIcon)}${this.tool("Move", moveIcon)}</div>
            <div class="mini">${modifyTools.map(([l, i]) => this.tool(l, i))}</div>
          </div>
          <div class="title">Modify</div>
        </section>
        <section class="panel meas">
          <div class="body"><div class="col">
            <div class="row">${this.tool("Measure", measureBetween)}${downGray}</div>
            <div class="row">${this.tool("Aligned Dimension", alignedDim)}${down}</div>
          </div></div>
          <div class="title">Measure</div>
        </section>
        <section class="panel ctx form">
          <div class="body">
            <div class="anchor">
              <button class="big hot" aria-haspopup="menu" @click=${() => (this.formMenu = !this.formMenu)}>
                <span class="pic">${createForm}</span><span>Create</span><span class="caret">Form${down}</span>
              </button>
              ${this.formMenu ? html`
                <div class="menu" role="menu">
                  <button class="cur" role="menuitem">${frustum(true)}Solid Form</button>
                  <button role="menuitem">${frustum(false)}Void Form</button>
                  <span class="pointer">${icon(14, 20, cursor(1, 1))}</span>
                </div>` : nothing}
            </div>
            ${this.big(html`Divide<br />Path`, dividePath)}
          </div>
          <div class="title">${launcher}</div>
        </section>
        <section class="panel ctx subc">
          <div class="body">
            <label class="row" for="subcat">${subcatIcon}Subcategory:</label>
            <span class="pick"><select id="subcat"><option>Generic Models [proje...</option></select>${icon(9, 6, svg`<path d="M0 0.500h9L4.500 5Z" fill="#3c3c3c"/>`)}</span>
          </div>
          <div class="title">Subcategory</div>
        </section>
        <section class="panel ctx seln">
          <div class="body">
            ${this.big("Filter", funnel(28))}
            <div class="col">${this.rowBtn("Save", saveSel)}${this.rowBtn("Load", loadSel, "off")}${this.rowBtn("Edit", editSel, "off")}</div>
          </div>
          <div class="title">Selection</div>
        </section>
        <section class="panel fam">
          <div class="body">
            ${this.big(html`Load into<br />Project`, loadProj)}
            ${this.big(html`Load into<br />Project and Close`, loadClose)}
          </div>
          <div class="title">Family Editor</div>
        </section>
      </div>`;
  }

  private renderValue(p: Prop) {
    if (p.value === "check-on") return html`<td class="box"><input type="checkbox" aria-label=${p.name} checked /></td>`;
    if (p.value === "check-off") return html`<td><input type="checkbox" aria-label=${p.name} /></td>`;
    if (p.value === "edit") return html`<td class="edit-cell"><button class="edit-btn">Edit...</button></td>`;
    return html`<td>${p.value ?? nothing}</td>`;
  }

  private renderDock() {
    return html`
      <aside class="dock">
        <div class="head">Properties<button class="plain" aria-label="Close Properties">${close}</button></div>
        <div class="type">
          <div class="logo">${icon(62, 62, svg`<defs><linearGradient id="rg" x1="0" y1="0" x2="0" y2="1"><stop offset="0" stop-color="#b4b4b4"/><stop offset="1" stop-color="#959595"/></linearGradient></defs>
            <path d="M2 3h30L22 36H2Z" fill="#e4e4e4"/><path d="M34 30l24 4v6L40 38Z" fill="#e4e4e4"/>
            <path fill="url(#rg)" fill-rule="evenodd" d="M16 5l13-1q14 0 14 11q0 8-6 11l14 20-11-2L28 29v15l-12 2ZM27 11v11q7 1 7-6t-7-5Z"/><path d="M16 5l6 3v36l-6 2Z" fill="#888"/>`)}</div>
          ${icon(9, 6, svg`<path d="M0 1h9L4.500 5.500Z" fill="#999"/>`)}
        </div>
        <div class="filter">
          <span class="pick"><select aria-label="Element filter"><option>Lines (Generic Models) (2)</option></select>${chevron}</span>
          <button class="edit">${editTypeIcon}Edit Type</button>
        </div>
        <div class="grid">
          <table>
            <colgroup><col class="c1" /><col /><col class="c3" /></colgroup>
            <tbody>
              ${properties.map((s) => html`
                <tr class="cat"><th colspan="3"><div>${s.title}${icon(7, 9, svg`<path d="M0.500 4.500l3-3l3 3M0.500 8.500l3-3l3 3" fill="none" stroke="#111" stroke-width="1.300"/>`)}</div></th></tr>
                ${s.rows.map((r) => html`
                  <tr class=${classMap({ p: true, off: !!r.off })}>
                    <th scope="row">${r.name}</th>${this.renderValue(r)}
                    <td class="side">${r.value === "check-on" ? html`<button class="more" aria-label="Associate parameter"></button>` : nothing}</td>
                  </tr>`)}`)}
            </tbody>
          </table>
        </div>
        <div class="foot"><a href="#help">Properties help</a><button disabled>Apply</button></div>
        <div class="split"></div>
        <div class="head">Project Browser - Family1<button class="plain" aria-label="Close Project Browser">${close}</button></div>
        <ul class="tree">
          ${tree.map((n) => html`<li>${[...n.g].map(guide)}${n.icon ?? nothing}<span class="label ${n.cls ?? ""}">${n.label}</span></li>`)}
        </ul>
      </aside>`;
  }

  private renderScene() {
    return html`<svg class="scene" viewBox="326 170 1143 876" preserveAspectRatio="xMidYMid slice" role="img" aria-label="3D view">
      <g fill="none" stroke="#000" stroke-dasharray="19 15 2 15" shape-rendering="crispEdges">
        <path d="M897 339L339 661"/><path d="M897 339L1452 659"/>
      </g>
      <g fill="none" stroke="#222" stroke-dasharray="9 7" shape-rendering="crispEdges">
        <path d="M618.500 500V371M1070.500 438V310M1176.500 500V371"/>
        <path d="M618 500L1176 822M1176 500L618 822M932 519L676 666"/>
      </g>
      <g fill="none" stroke="#1450c0" shape-rendering="crispEdges">
        <path d="M677 639L723 536L819 570L852 485L915 521"/>
        <path d="M677 639C723 536 771 553 803 540C835 527 852 485 915 521"/>
        <path d="M743 838L852 613L989 657L1070 557"/>
        <path d="M743 838C852 613 989 657 1070 557"/>
      </g>
      <path d="M1449 656l5 2l-1 5M1450 655l5 6M1449 661l5-1" fill="none" stroke="#1450c0"/>
      <defs><filter id="soft" x="-30%" y="-30%" width="160%" height="160%"><feGaussianBlur stdDeviation="4"/></filter></defs>
      <path d="M1372 248L1409 232L1447 248L1409 276Z" fill="#555" opacity="0.700" filter="url(#soft)"/>
      <path d="M1409 194L1444 210L1409 229L1374 210Z" fill="#a9a9a9"/>
      <path d="M1374 210L1409 229V271L1377 249Z" fill="#a2a2a2"/>
      <path d="M1444 210L1409 229V271L1442 249Z" fill="#a6a6a6"/>
      <path d="M1374 210L1409 229L1444 210M1409 229V271" fill="none" stroke="#777" stroke-dasharray="3 1"/>
      <path d="M1409 222l7 4v8l-7 4l-7-4v-8Z" fill="#8d8d8d" opacity="0.400"/>
      <g font-size="9" font-weight="700" fill="#6e6e6e" text-anchor="middle">
        <text transform="translate(1408 213) rotate(20) skewX(-20)">TOP</text>
        <text transform="translate(1390 243) rotate(27) skewX(20)">FRONT</text>
        <text transform="translate(1428 244) rotate(-28) skewX(-20)">RIGHT</text>
      </g>
    </svg>`;
  }

  private renderView() {
    const tabs: [string, TemplateResult][] = [["Level 1", planTab], ["{3D}", house("#777")], ["{3D}", house("#333")]];
    return html`
      <main class="view">
        <div class="vtabs">
          ${tabs.map(([t, i], n) => html`<div class="vtab ${n === this.viewTab ? "on" : ""}">
            <button @click=${() => (this.viewTab = n)}>${i}${t}</button>
            ${n === this.viewTab ? html`<button class="close" aria-label="Close view">${close}</button>` : nothing}</div>`)}
          <button class="plain list" aria-label="View list">${icon(11, 9, svg`<path d="M1 1.500h9" stroke="#222"/><path d="M1 4h9L5.500 8Z" fill="#222"/>`)}</button>
        </div>
        <div class="stage">
          <div class="canvas">
            ${this.renderScene()}
            <div class="nav">
              <button class="plain end" aria-label="Close navigation bar">${icon(8, 8, svg`<circle cx="4" cy="4" r="4" fill="#666"/><path d="M2.500 2.500l3 3m0-3l-3 3" stroke="#ccc"/>`)}</button>
              <button class="plain" aria-label="Steering wheel">${icon(26, 34, svg`<path d="M10.500 9h9v9a9 9 0 1 1-9-9Z" fill="#c6c6c6" stroke="#666" stroke-width="1.500"/><circle cx="10.500" cy="18" r="4.500" fill="#bbb" stroke="#666" stroke-width="1.500"/><path d="M14.500 22.500l2-2h8v7l-2 3h-8Z" fill="#b9dcf6" stroke="#777"/><path d="M22 22l2.500-1.500v7L22 30Z" fill="#3f93dc"/>`)}${downGray}</button>
              <div class="rule"></div>
              <button class="plain" aria-label="Zoom region">${icon(20, 22, svg`<rect x="3.500" y="4.500" width="11" height="11" fill="#a6a6a6" stroke="#666"/><circle cx="13.500" cy="15" r="3.500" fill="#c8c8c8" stroke="#666" stroke-width="1.500"/><path d="M16 18l3 3" stroke="#666" stroke-width="2"/>`)}${icon(8, 18, svg`<path d="M1 8h6L4 11Z" fill="#666"/>`)}</button>
              <button class="plain end" aria-label="Navigation options">${icon(8, 8, svg`<circle cx="4" cy="4" r="4" fill="#666"/><path d="M2 3h4M2.500 5h3" stroke="#ccc"/>`)}</button>
            </div>
          </div>
          <div class="vbar">
            ${icon(9, 7, svg`<path d="M1 6l3.500-4L8 6" fill="none" stroke="#444" stroke-width="1.800"/>`)}
            <div class="thumb"></div>
            ${icon(9, 7, svg`<path d="M1 1l3.500 4L8 1" fill="none" stroke="#444" stroke-width="1.800"/>`)}
          </div>
          <div class="controls">
            <button class="scale">1/2" = 1'-0"</button>
            ${viewTools.map(([l, i]) => html`<button class="t" aria-label=${l}>${i}</button>`)}
            <div class="hbar">
              ${icon(8, 9, svg`<path d="M6 1L2 4.500L6 8" fill="none" stroke="#444" stroke-width="1.800"/>`)}
              <div class="thumb"></div><span></span>
              ${icon(8, 9, svg`<path d="M2 1l4 3.500L2 8" fill="none" stroke="#444" stroke-width="1.800"/>`)}
              ${icon(18, 12, svg`<path d="M13 3h2M10 6h2M13 6h2M7 9h2M10 9h2M13 9h2" stroke="#aaa" stroke-width="2"/>`)}
            </div>
          </div>
        </div>
      </main>`;
  }

  render() {
    return html`
      <div class="app">
        <nav class="tabs">
          <button class="file">File</button>
          ${["Create", "Insert", "View", "Manage", "Add-Ins"].map((t) => html`<button>${t}</button>`)}
          <button class="on">Modify | Lines</button>
          <button class="cycle" aria-label="Ribbon display">${icon(16, 9, svg`<rect x="0.500" y="0.500" width="14" height="7" rx="2" fill="#eee" stroke="#444"/><path d="M5 5.500h5L7.500 3Z" fill="#222"/>`)}${down}</button>
        </nav>
        ${this.renderRibbon()}
        <div class="options">
          <span class="mode">Modify | Lines</span>
          <label for="host">Host:</label>
          <span class="pick"><select id="host" disabled></select>${chevron}</span>
          <button class="host">Show Host</button>
        </div>
        <div class="main">${this.renderDock()}${this.renderView()}</div>
        <footer class="status">
          <span class="msg">Click to select, TAB for alternates, CTRL adds, SHIFT unselects.</span>
          ${statusTools.map(([l, i]) => html`<button class="st" aria-label=${l}>${i}</button>`)}
          <button class="count" aria-label="Filter, 2 selected">${funnel(17)}:2</button>
          <span class="tick"></span><span class="tick"></span>
        </footer>
      </div>`;
  }
}
